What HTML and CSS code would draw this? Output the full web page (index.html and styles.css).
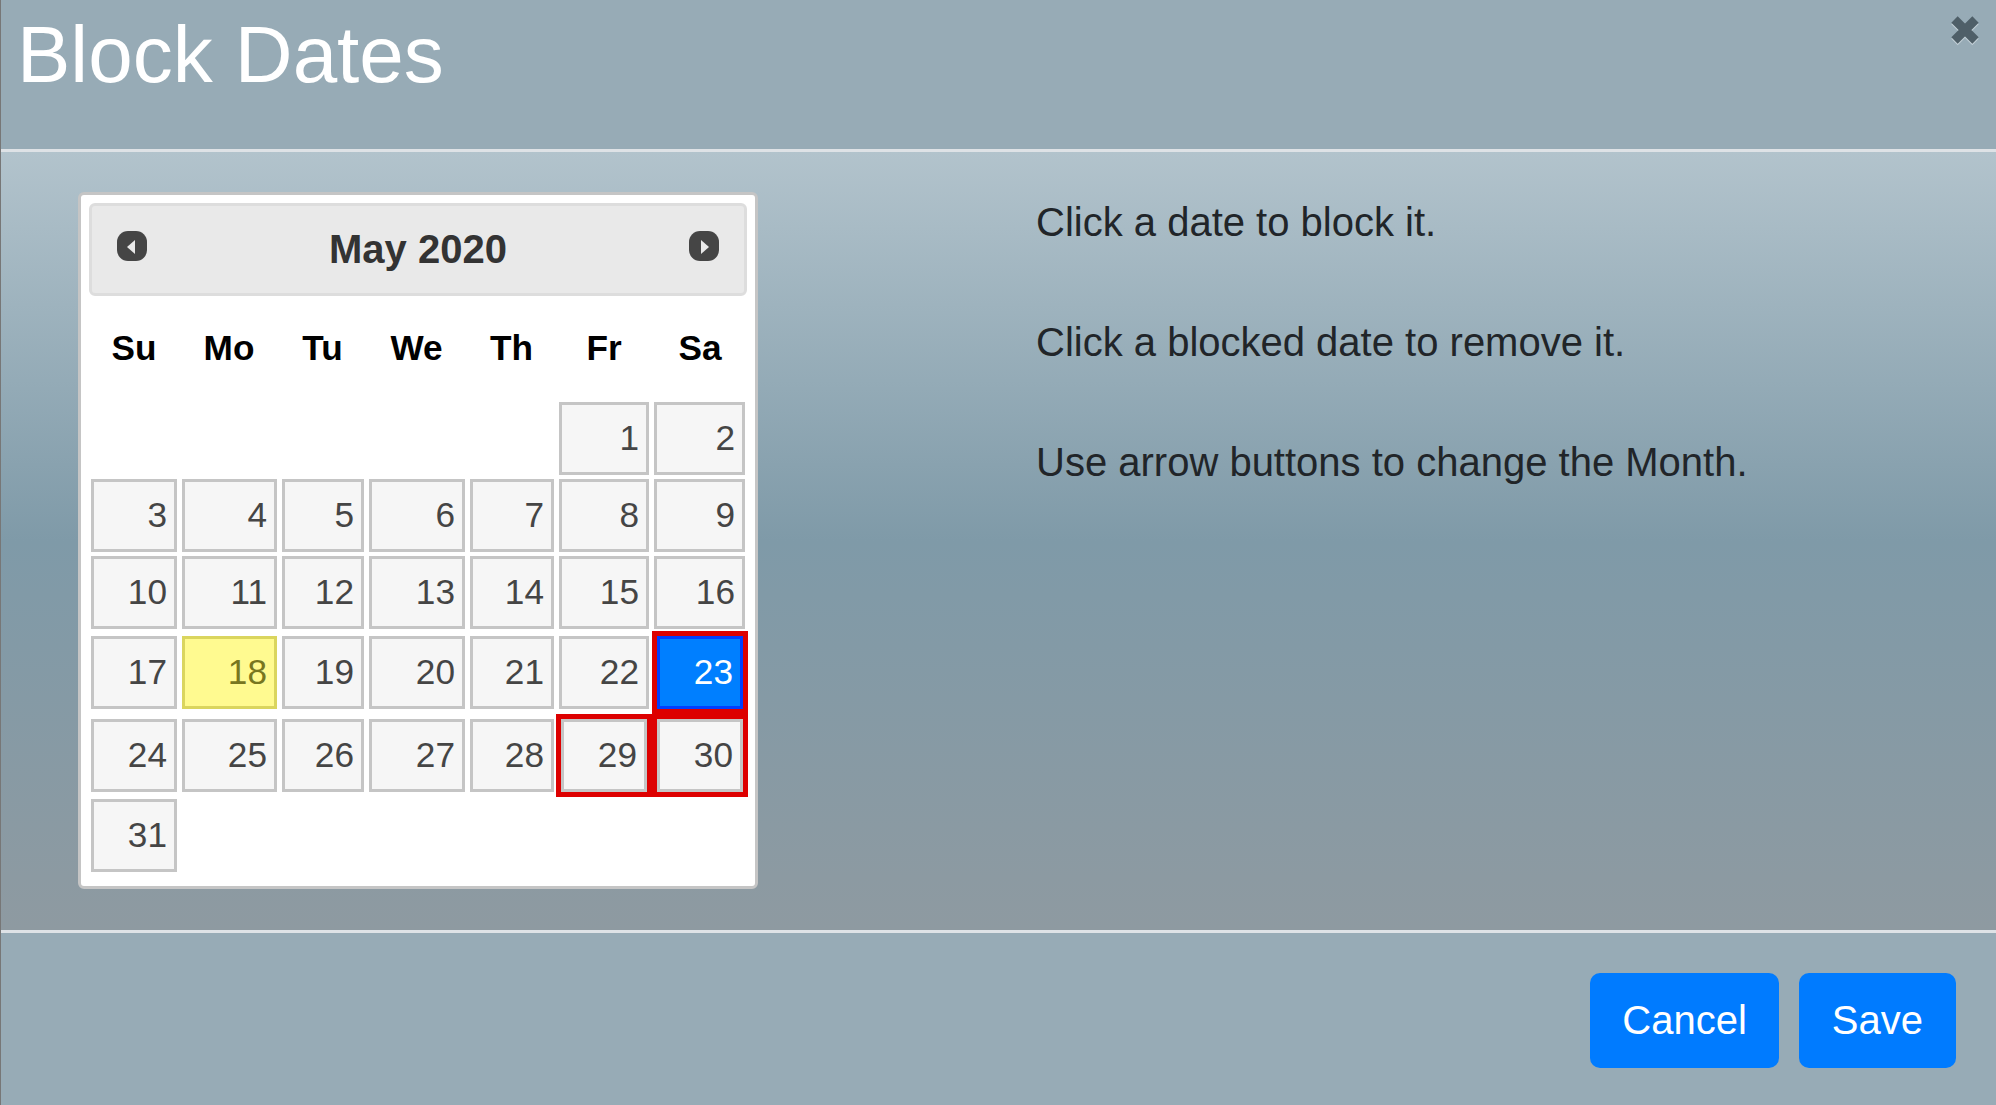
FILE: index.html
```html
<!DOCTYPE html>
<html lang="en">
<head>
    <meta charset="UTF-8">
    <title>Block Dates</title>
    <link rel="stylesheet" href="styles.css">
</head>
<body>

<div class="modal">
    <div class="modal-header">
        <h1>Block Dates</h1>
        <button class="close" aria-label="Close">
            <svg width="30" height="32" viewBox="0 0 30 32">
                <path class="close-shadow" d="M4.5 6 L25.5 27 M25.5 6 L4.5 27"/>
                <path class="close-mark" d="M4.5 4.5 L25.5 25.5 M25.5 4.5 L4.5 25.5"/>
            </svg>
        </button>
    </div>

    <div class="modal-body">
        <div class="calendar">
            <div class="calendar-header">
                <svg class="arrow" width="30" height="30" viewBox="0 0 30 30">
                    <rect width="30" height="30" rx="11"/>
                    <path d="M18 9 L18 23 L10 16 Z"/>
                </svg>
                <span class="calendar-title">May 2020</span>
                <svg class="arrow" width="30" height="30" viewBox="0 0 30 30">
                    <rect width="30" height="30" rx="11"/>
                    <path d="M12 9 L12 23 L20 16 Z"/>
                </svg>
            </div>
            <table>
                <colgroup>
                    <col class="col-su">
                    <col class="col-mo">
                    <col class="col-tu">
                    <col class="col-we">
                    <col class="col-th">
                    <col class="col-fr">
                    <col class="col-sa">
                </colgroup>
                <thead>
                    <tr>
                        <th>Su</th><th>Mo</th><th>Tu</th><th>We</th><th>Th</th><th>Fr</th><th>Sa</th>
                    </tr>
                </thead>
                <tbody>
                    <tr>
                        <td></td><td></td><td></td><td></td><td></td>
                        <td><a>1</a></td><td><a>2</a></td>
                    </tr>
                    <tr>
                        <td><a>3</a></td><td><a>4</a></td><td><a>5</a></td><td><a>6</a></td><td><a>7</a></td><td><a>8</a></td><td><a>9</a></td>
                    </tr>
                    <tr>
                        <td><a>10</a></td><td><a>11</a></td><td><a>12</a></td><td><a>13</a></td><td><a>14</a></td><td><a>15</a></td><td><a>16</a></td>
                    </tr>
                    <tr>
                        <td><a>17</a></td><td><a class="today">18</a></td><td><a>19</a></td><td><a>20</a></td><td><a>21</a></td><td><a>22</a></td>
                        <td class="blocked"><a class="selected">23</a></td>
                    </tr>
                    <tr>
                        <td><a>24</a></td><td><a>25</a></td><td><a>26</a></td><td><a>27</a></td><td><a>28</a></td>
                        <td class="blocked"><a>29</a></td>
                        <td class="blocked"><a>30</a></td>
                    </tr>
                    <tr>
                        <td><a>31</a></td><td></td><td></td><td></td><td></td><td></td><td></td>
                    </tr>
                </tbody>
            </table>
        </div>

        <div class="help">
            <p>Click a date to block it.</p>
            <p>Click a blocked date to remove it.</p>
            <p>Use arrow buttons to change the Month.</p>
        </div>
    </div>

    <div class="modal-footer">
        <button class="btn">Cancel</button>
        <button class="btn btn-save">Save</button>
    </div>
</div>

</body>
</html>
```

FILE: styles.css
```css
body {
    margin: 0;
    background-color: #97abb6;
    font-family: "Liberation Sans", Arial, sans-serif;
    font-size: 35.2px;
    line-height: 53px;
    color: #212529;
}

.modal {
    display: flex;
    flex-direction: column;
    height: 100vh;
    border-left: 1px solid #777;
    box-sizing: border-box;
    overflow: hidden;
}

.modal-header {
    display: flex;
    justify-content: space-between;
    align-items: flex-start;
    height: 152px;
    padding: 0 16px;
    border-bottom: 3px solid #dee2e6;
    box-sizing: border-box;
}

h1 {
    margin: 0;
    padding-top: 7px;
    font-size: 80px;
    font-weight: normal;
    line-height: 96px;
    color: white;
}

.close {
    margin-top: 15px;
    padding: 0;
    border: none;
    background: none;
    line-height: 0;
}

.close-mark {
    fill: none;
    stroke: #4f5f68;
    stroke-width: 9;
}

.close-shadow {
    fill: none;
    stroke: #c3d0d7;
    stroke-width: 9;
}

.modal-body {
    flex: 1;
    display: grid;
    grid-template-columns: 958px 1fr;
    padding: 40px 0 0 77px;
    background: linear-gradient(to bottom, #b2c3cc 0%, #7f9aa8 50%, #8e9aa1 100%);
}

.calendar {
    width: 680px;
    height: 697px;
    padding: 8px 7px 0 8px;
    background-color: white;
    border: 3px solid #c5c5c5;
    border-radius: 6px;
    box-sizing: border-box;
}

.calendar-header {
    display: flex;
    justify-content: space-between;
    align-items: flex-start;
    width: 658px;
    height: 93px;
    padding: 25px 25px 0;
    background-color: #e9e9e9;
    border: 3px solid #ddd;
    border-radius: 6px;
    box-sizing: border-box;
}

.arrow {
    fill: #454545;
    flex-shrink: 0;
}

.arrow path {
    fill: #e9e9e9;
}

.calendar-title {
    margin-top: -12px;
    font-size: 40px;
    font-weight: bold;
    line-height: 60px;
    color: #333;
}

table {
    width: 659px;
    border-collapse: separate;
    border-spacing: 0;
    table-layout: fixed;
}

.col-su { width: 90px; }
.col-mo { width: 100px; }
.col-tu { width: 87px; }
.col-we { width: 101px; }
.col-th { width: 89px; }
.col-fr { width: 96px; }
.col-sa { width: 96px; }

th {
    height: 102px;
    padding: 0 0 2px;
    color: black;
    font-weight: bold;
    text-align: center;
}

td {
    padding: 2px 2px 2px 3px;
}

td:first-child {
    padding-left: 2px;
}

td:nth-child(6), td:nth-child(7) {
    padding: 2px 3px 2px 3px;
}

td:nth-child(7) {
    padding-left: 2px;
}

td.blocked {
    padding: 0;
    border: 5px solid #d00;
}

td a {
    display: block;
    padding: 6px 7px 8px;
    background-color: #f6f6f6;
    border: 3px solid #c5c5c5;
    color: #454545;
    text-align: right;
}

td a.today {
    background-color: #fffa90;
    border-color: #dad55e;
    color: #777620;
}

td a.selected {
    background-color: #007fff;
    border-color: #003eff;
    color: white;
}

.help p {
    margin: 0 0 60px;
    font-size: 40px;
    line-height: 60px;
}

.modal-footer {
    display: flex;
    justify-content: flex-end;
    gap: 20px;
    height: 175px;
    padding: 40px 40px 0 0;
    border-top: 3px solid #dee2e6;
    box-sizing: border-box;
}

.btn {
    height: 95px;
    padding: 0 32px;
    background-color: #007bff;
    color: white;
    border: none;
    border-radius: 10px;
    font-family: inherit;
    font-size: 40px;
}

.btn-save {
    padding: 0 33px;
}
```
